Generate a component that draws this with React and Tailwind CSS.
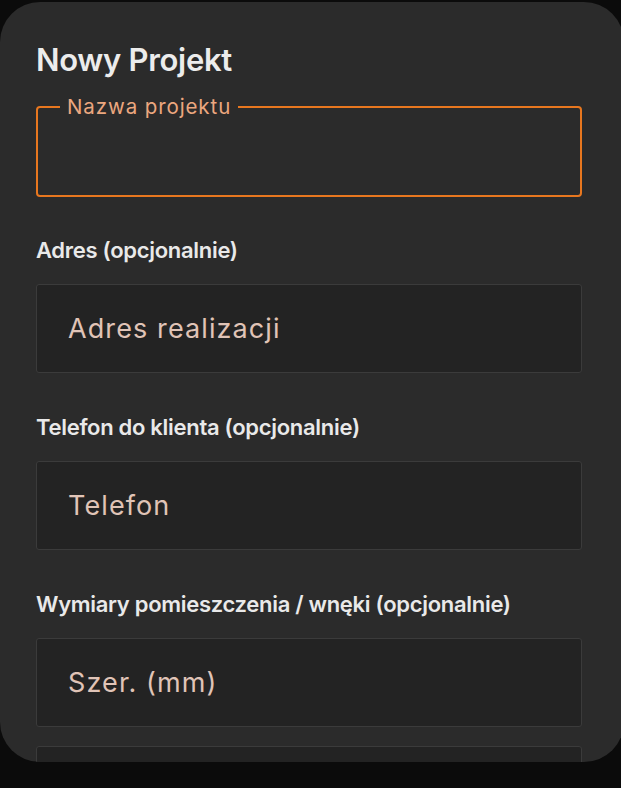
import React from 'react'

const fields = [
  { label: 'Adres (opcjonalnie)', placeholder: 'Adres realizacji' },
  { label: 'Telefon do klienta (opcjonalnie)', placeholder: 'Telefon' },
  { label: 'Wymiary pomieszczenia / wnęki (opcjonalnie)', placeholder: 'Szer. (mm)' },
]

const TextBox = ({ placeholder }) => (
  <input
    type="text"
    placeholder={placeholder}
    className="block w-full h-[89px] bg-[#232323] border-[1.5px] border-[#3b3b3b] rounded-[3px] px-[31px] text-[27px] tracking-[1.1px] text-[#e6e6e6] placeholder:text-[#e0c4b7] outline-none"
  />
)

const App = () => {
  return (
    <div className="min-h-[788px] bg-[#0b0b0b] pt-[2px]" style={{ fontFamily: 'Inter, Roboto, sans-serif' }}>
      <div className="h-[760px] w-[624px] bg-[#2b2b2b] rounded-[40px] overflow-hidden px-[36px] pt-[41px]">
        <h1 className="text-[31px] leading-[34px] font-semibold text-[#ececec] tracking-[-0.3px]">Nowy Projekt</h1>

        {/* Outlined field with notched label */}
        <fieldset className="mt-[19px] w-[546px] border-2 border-[#e8771f] rounded-[4px] px-0">
          <legend className="ml-[22px] px-[7px] text-[20.5px] leading-[22px] text-[#eca77f] tracking-[0.9px]">
            Nazwa projektu
          </legend>
          <div className="h-[77px]"></div>
        </fieldset>

        {fields.map((f, i) => (
          <div key={f.label} className={i === 0 ? 'mt-[39px] w-[546px]' : 'mt-[40px] w-[546px]'}>
            <label className="block text-[22px] leading-[28px] font-semibold text-[#e9e9e9] tracking-[-0.3px]">{f.label}</label>
            <div className="mt-[20px]">
              <TextBox placeholder={f.placeholder} />
            </div>
          </div>
        ))}
        <div className="mt-[19px] w-[546px]">
          <TextBox placeholder="Wys. (mm)" />
        </div>
      </div>
    </div>
  )
}

export default App
